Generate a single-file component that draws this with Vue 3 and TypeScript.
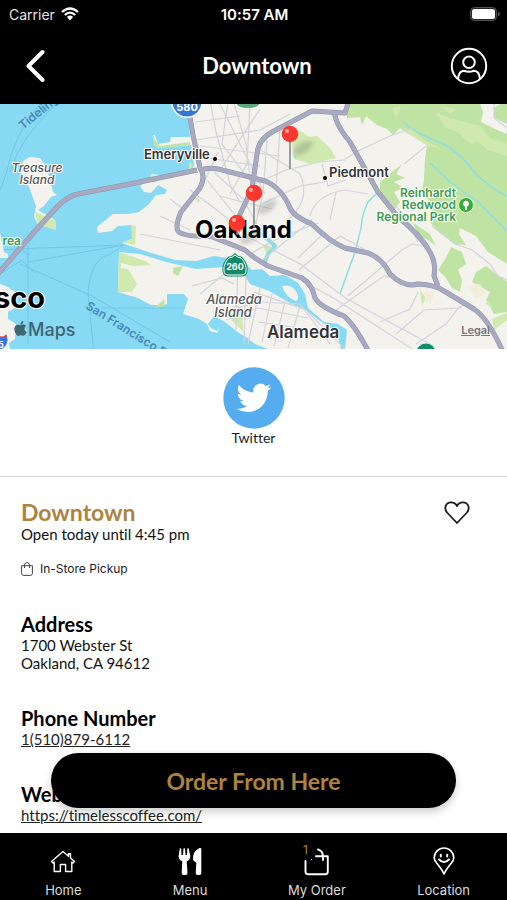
<script setup lang="ts">
interface Tab { id: string; label: string; badge?: number }
interface Pin { x: number; y: number; stem: number }

const place = 'Downtown'
const tabs: Tab[] = [
  { id: 'home', label: 'Home' },
  { id: 'menu', label: 'Menu' },
  { id: 'order', label: 'My Order', badge: 1 },
  { id: 'location', label: 'Location' },
]
const pins: Pin[] = [
  { x: 290, y: 30, stem: 35 },
  { x: 254, y: 89, stem: 34 },
  { x: 237, y: 119, stem: 12 },
]
const highways: string[] = [
  'M-4 172L36 126L58 102Q68 92 78 90L130 80L197 66',
  'M187 -4L193 31L200 64Q206 72 200 84L181 108Q175 122 178 127Q183 133 210 132L245 146Q255 155 268 162L302 174Q312 180 315 194Q320 203 344 212Q354 220 370 250',
  'M200 66Q212 62 226 67L265 77Q282 84 290 104Q293 112 312 120Q330 138 345 144L368 149Q382 154 390 170Q404 184 418 180Q436 181 444 187L474 205Q488 214 504 250',
  'M237 130L240 110L252 85L257 50Q258 36 272 28L312 7L345 9L349 -4',
  'M335 9Q335 20 350 38L378 88L398 113Q422 132 431 150Q436 160 434 172L438 182',
]
const streets: string[] = [
  'M210 -4L216 28L230 80L240 98', 'M220 0L265 90', 'M233 -4L246 40L250 75', 'M250 0L247 60L230 90', 'M196 36L260 26L290 10',
  'M194 52L260 62', 'M207 76L250 130', 'M214 68L244 96L262 130', 'M267 36L263 90L253 130', 'M280 25L276 84', 'M260 46L284 60L300 70Q312 96 286 118',
  'M255 80L286 66L320 58L345 56', 'M262 100L300 82L325 78', 'M322 60L328 82L346 76', 'M345 55L360 46L390 32L412 24', 'M310 112Q316 90 345 86L368 90',
  'M330 116L336 88', 'M190 86L222 110L245 130', 'M170 95L186 107', 'M160 112L190 126', 'M140 130L190 140L220 146', 'M250 134L300 160L347 195L430 240',
  'M250 150L275 136L318 119', 'M299 166L340 132L364 145', 'M312 116L260 158', 'M325 128L298 154', 'M348 192Q378 166 402 146L412 140L430 142',
  'M336 206Q358 190 384 172L402 176', 'M380 218L410 205L418 188', 'M396 230L424 206L460 204L466 198',
  'M416 240L446 220L460 202', 'M378 86L404 110L418 138', 'M302 177L335 195L420 250',
  'M192 182L222 174L234 180', 'M200 190L234 162', 'M238 159L236 226', 'M246 172L244 240', 'M226 216L258 204L308 214', 'M228 207L258 198L300 200L330 240',
  'M254 188L306 206L350 250', 'M258 218L314 226', 'M260 184L248 240', 'M272 190L262 238', 'M286 194L274 242', 'M300 202L288 244',
  'M218 48L205 76', 'M196 18L240 12', 'M200 42L280 52', 'M219 92L272 105', 'M228 -2L222 40L260 90', 'M260 5L220 66',
]
const ferries: string[] = [
  'M40 0Q14 30 6 70L-2 92', 'M56 0Q20 34 10 68', 'M0 146L40 144L100 142L124 141', 'M20 160L92 192L170 238', 'M28 158L124 141L110 150Q90 155 88 190L94 250',
  'M28 142L28 240', 'M20 155L36 170', 'M102 204L220 204', 'M0 129L30 152', 'M0 170L24 155',
]
</script>

<template>
  <div class="app">
    <header class="top">
      <div class="status">
        <span class="carrier">Carrier
          <svg class="wifi" viewBox="0 0 18 14" aria-hidden="true">
            <path d="M1 5Q9 -2 17 5M3.8 8Q9 3.2 14.2 8" fill="none" stroke="#fff" stroke-width="2.3" />
            <path d="M5.9 10Q9 7.2 12.1 10L9 13.4Z" fill="#fff" />
          </svg>
        </span>
        <span class="clock">10:57 AM</span>
        <span class="power">
          <svg class="battery" viewBox="0 0 30 14" aria-hidden="true">
            <rect x=".5" y=".5" width="26" height="13" rx="4" fill="#222" stroke="#555" />
            <rect x="2" y="2" width="23" height="10" rx="2.5" fill="#fff" />
            <path d="M28 4.8Q30 5.5 30 7T28 9.2Z" fill="#555" />
          </svg>
        </span>
      </div>
      <div class="titlebar">
        <button class="iconbtn back" aria-label="Back">
          <svg viewBox="0 0 20 34" width="20" height="34"><path d="M16.500 3L2.500 17L16.500 31" fill="none" stroke="#fff" stroke-width="4" stroke-linecap="round" stroke-linejoin="round" /></svg>
        </button>
        <h1>{{ place }}</h1>
        <button class="iconbtn account" aria-label="Account">
          <svg viewBox="0 0 38 38" width="38" height="38" fill="none" stroke="#fff" stroke-width="2">
            <circle cx="19" cy="19" r="17.2" /><circle cx="19" cy="15.3" r="5.8" />
            <path d="M8.2 31.8Q8.5 24.2 14 23.8Q19 25.7 24 23.8Q29.5 24.2 29.8 31.8" />
          </svg>
        </button>
      </div>
    </header>

    <main>
      <section class="mapbox" aria-label="Map of nearby stores">
        <svg class="map" viewBox="0 0 507 245" preserveAspectRatio="xMidYMid slice">
          <rect width="507" height="245" fill="#88daf4" />
          <path class="ferry" v-for="f in ferries" :key="f" :d="f" />
          <!-- mainland -->
          <path class="land" d="M187 0L190 33L171 33L170 38L158 40L155 31L153 31L154 40L158 44L191 41L194 62L188 68L168 72L151 70L150 75L140 82L144 88L151 89L158 81L167 86L165 90L156 91L149 100L139 108L128 110L113 110L97 123L98 129L112 127L118 122L131 121L134 134L122 139L145 147L175 156L196 157L214 152L235 155L246 160L252 166L262 165L270 172L285 171L298 179L305 190L308 204L324 218L338 220L347 226L345 245L507 245L507 0Z" />
          <!-- Alameda -->
          <path class="land" d="M119 148L140 150L166 158L196 165L224 163L242 167L250 180L269 187L290 199L307 207L324 220L337 229L341 245L268 245L255 240L246 233L239 229L225 218L214 212L208 220L211 224L217 227L220 223L217 229L210 227L207 220L199 215L183 210L188 195L184 190L167 190L167 200L162 201L151 201L138 194L118 188Z" />
          <path class="land" d="M282 182Q290 180 296 187Q300 195 296 197Q286 194 282 182Z" />
          <path class="land" d="M30 53L40 54L47 64L53 88L57 91L51 93L44 102L38 106L55 116L56 126L38 120L34 113L36 102L29 83L20 68L23 57Z" />
          <path class="land" d="M0 128L4 148L8 150L8 154L0 154L0 180L8 183L18 190L10 193L20 201L8 208L8 215L16 220L15 235L9 239L10 245L0 245Z" />
          <!-- parks -->
          <path class="park" d="M347 0L347 14L360 13L362 21L366 12L377 21L387 25L393 31L400 24L412 32L427 40L425 55L424 75L422 88L432 100L434 112L430 118L440 129L455 140L466 141L459 130L460 124L476 132L488 148L507 160L507 30L495 25L481 18L483 8L480 0Z" />
          <path class="park pale" d="M440 2L456 5L450 10ZM435 8L450 14L480 22L490 34L507 40L507 52L488 46L478 38L470 40L458 28L446 24ZM392 4L402 2L396 14ZM404 24L412 26L424 36L440 44L428 42L410 31Z" />
          <path class="park" d="M500 0L494 4L494 14L507 20V0Z" />
          <path class="park" d="M451 143L462 148L466 160L458 166L462 176L460 188L452 184L446 174L438 166L446 154Z" />
          <path class="park" d="M486 162L507 178L507 208L494 210L486 196L490 188L472 178L476 168Z" />
          <path class="park" d="M380 78L392 68L402 60L396 70L405 74L394 78L404 84L394 88L400 98L394 106L380 90Z" />
          <path class="park" d="M412 118L430 130L436 142L428 136L420 132Z" />
          <path class="park pale" d="M492 215L507 209L507 216L494 226ZM420 186L426 194L422 202ZM488 196L494 204L486 200Z" />
          <path class="park pale" d="M299 26L310 33L317 32L330 44L336 54L311 60L294 55L292 39Z" />
          <path class="park pale" d="M119 148L145 157L151 161L132 162L121 159V164L128 165L137 180L132 188L118 188Z" />
          <path class="park" d="M153 31L154 40L158 44L190 41L190 38L160 42L156 37ZM173 164L183 162L180 168L178 172L173 169ZM155 204L164 195L165 202Z" />
          <path class="park pale" d="M150 71L164 73L154 79ZM35 108L56 117L56 126L38 120ZM190 57L194 66L188 68ZM194 92L200 96L198 99ZM131 121L136 122L135 141L122 138L132 135ZM235 200L242 207L243 227L231 216ZM263 140L274 144L266 150Z" />
          <path d="M403 18Q420 32 440 38Q460 48 476 70Q490 84 507 92M430 59L450 78L478 98L507 127M378 88L368 98Q362 110 361 124L355 148L340 190M329 6L337 18M294 51L296 54" class="creek" />
          <path d="M262 130L275 142L268 150L264 160" class="creek wide" />
          <path class="land sand" d="M468 182L480 180L486 190L476 194ZM424 188L434 188L432 198L426 198Z" />
          <path class="street" v-for="s in streets" :key="s" :d="s" />
          <path class="street" d="M432 122L455 140L472 146L490 160L498 172L507 176M426 42L404 60M494 0L494 14L507 24" />
          <path class="highway edge" v-for="h in highways" :key="'e' + h" :d="h" />
          <path class="highway" v-for="h in highways" :key="h" :d="h" />
          <!-- route shields -->
          <circle cx="187" cy="-2" r="16" fill="#fff" /><circle cx="187" cy="-2" r="14.500" fill="#3477d5" />
          <text x="187" y="7" class="shield" text-anchor="middle">580</text>
          <ellipse cx="248" cy="0" rx="11" ry="4" fill="#59a980" />
          <path d="M235 151Q238 154 241 154Q247 160 246 167Q246 171 241 171L229 171Q224 171 224 167Q223 160 229 154Q232 154 235 151Z" fill="#138b69" stroke="#138b69" stroke-width="3" />
          <path d="M235 151Q238 154 241 154Q247 160 246 167Q246 171 241 171L229 171Q224 171 224 167Q223 160 229 154Q232 154 235 151Z" fill="none" stroke="#fff" />
          <text x="235" y="166" class="shield small" text-anchor="middle">260</text>
          <circle cx="426" cy="249" r="10" fill="#138b69" stroke="#d4eadf" />
          <path d="M-4 230Q3 235 7 230Q12 243 -4 248Z" fill="#3477d5" stroke="#fff" /><path d="M-4 230Q3 235 6 230L7 234H-4Z" fill="#dc4545" />
          <text x="-2" y="244" class="shield small">5</text>

          <text class="label" x="144" y="55">Emeryville</text><circle cx="215" cy="55" r="2" />
          <text class="label" x="329" y="73">Piedmont</text><circle cx="325" cy="74" r="2" />
          <text class="label big" x="267" y="234">Alameda</text>
          <g class="isle" text-anchor="middle">
            <text x="37" y="68">Treasure</text><text x="37" y="80">Island</text>
            <text x="234" y="200" class="lg">Alameda</text><text x="233" y="213" class="lg">Island</text>
          </g>
          <g class="parkname" text-anchor="end">
            <text x="456" y="93">Reinhardt</text><text x="456" y="105">Redwood</text><text x="456" y="117">Regional Park</text>
            <text x="21" y="141">rea</text>
          </g>
          <circle cx="466" cy="101" r="7.500" fill="#39ad3c" stroke="#e5f5d8" />
          <path d="M465 106V102.500A3 3 0 1 1 467 102.500V106Z" fill="#fff" />
          <text class="sea" transform="translate(23 26) rotate(-39)">Tideling</text>
          <text class="sea" transform="translate(85 204) rotate(32)">San Francisco B</text>
          <text class="city" x="-6" y="204">sco</text>
          <text class="city oak" x="195" y="134">Oakland</text>
          <g v-for="p in pins" :key="p.x">
            <ellipse class="pinshade" :cx="p.x + 13" :cy="p.y + 14" rx="11" ry="5" :transform="`rotate(-32 ${p.x + 13} ${p.y + 14})`" />
            <path :d="`M${p.x} ${p.y + 7}V${p.y + p.stem}`" stroke="#888" stroke-width="1.600" />
            <circle :cx="p.x" :cy="p.y" r="8.300" fill="#fb382f" />
            <circle :cx="p.x - 3" :cy="p.y - 3" r="2" fill="#ffaaa2" />
          </g>
          <g fill="#3f6472">
            <path transform="translate(13 217) scale(.62)" d="M12.152 6.896c-.948 0-2.415-1.078-3.96-1.04-2.04.027-3.91 1.183-4.961 3.014-2.117 3.675-.546 9.103 1.519 12.09 1.013 1.454 2.208 3.09 3.792 3.039 1.52-.065 2.09-.987 3.935-.987 1.831 0 2.35.987 3.96.948 1.637-.026 2.676-1.48 3.676-2.948 1.156-1.688 1.636-3.325 1.662-3.415-.039-.013-3.182-1.221-3.22-4.857-.026-3.04 2.48-4.494 2.597-4.559-1.429-2.09-3.623-2.324-4.39-2.376-2-.156-3.675 1.09-4.61 1.09zM15.53 3.83c.843-1.012 1.4-2.427 1.245-3.83-1.207.052-2.662.805-3.532 1.818-.78.896-1.454 2.338-1.273 3.714 1.338.104 2.715-.688 3.559-1.701" />
            <text class="brand" x="28" y="232">Maps</text>
          </g>
        </svg>
        <a class="legal" href="#legal">Legal</a>
      </section>

      <section class="social">
        <a href="#twitter" class="twitter">
          <svg viewBox="0 0 62 62" width="62" height="62" aria-hidden="true">
            <circle cx="31" cy="31" r="30.700" fill="#55acee" />
            <path fill="#fff" transform="translate(13.500 13.500) scale(1.450)" d="M23.953 4.57a10 10 0 01-2.825.775 4.958 4.958 0 002.163-2.723c-.951.555-2.005.959-3.127 1.184a4.92 4.92 0 00-8.384 4.482C7.69 8.095 4.067 6.13 1.64 3.162a4.822 4.822 0 00-.666 2.475c0 1.71.87 3.213 2.188 4.096a4.904 4.904 0 01-2.228-.616v.06a4.923 4.923 0 003.946 4.827 4.996 4.996 0 01-2.212.085 4.936 4.936 0 004.604 3.417 9.867 9.867 0 01-6.102 2.105c-.39 0-.779-.023-1.17-.067a13.995 13.995 0 007.557 2.209c9.053 0 13.998-7.496 13.998-13.985 0-.21 0-.42-.015-.63A9.935 9.935 0 0024 4.59z" />
          </svg>
          <span>Twitter</span>
        </a>
      </section>

      <section class="details">
        <div class="heading">
          <div>
            <h2 class="name">{{ place }}</h2>
            <p>Open today until 4:45 pm</p>
          </div>
          <button class="iconbtn" aria-label="Add to favourites">
            <svg viewBox="0 0 26 24" width="26" height="24"><path d="M13 22L3 11.500C-.5 7 2 1.300 7 1.300C10 1.300 12 3 13 5C14 3 16 1.300 19 1.300C24 1.300 26.500 7 23 11.500Z" fill="none" stroke="#1c1c1c" stroke-width="1.800" stroke-linejoin="round" /></svg>
          </button>
        </div>
        <div class="pickup">
          <svg viewBox="0 0 12 14" width="12" height="14" fill="none" stroke="#444" aria-hidden="true"><path d="M.6 3.700H11.400V11.500Q11.400 13.400 9.500 13.400H2.500Q.6 13.400 .6 11.500ZM3.500 6V3Q3.700 .6 6 .6T8.500 3V6" /></svg>
          <span>In-Store Pickup</span>
        </div>
        <div class="field">
          <h2>Address</h2>
          <p>1700 Webster St<br>Oakland, CA 94612</p>
        </div>
        <div class="field">
          <h2>Phone Number</h2>
          <a href="tel:15108796112">1(510)879-6112</a>
        </div>
        <div class="field">
          <h2>Website</h2>
          <a href="#website">https://timelesscoffee.com/</a>
        </div>
      </section>
    </main>

    <div class="dock">
      <button class="order">Order From Here</button>
      <nav class="tabs">
        <a v-for="t in tabs" :key="t.id" :href="'#' + t.id" class="tab">
          <svg viewBox="0 0 28 30" width="28" height="30" fill="none" stroke="#fff" stroke-width="1.600" stroke-linejoin="round" aria-hidden="true">
            <path v-if="t.id === 'home'" d="M2.500 15.500L14 5.500L19.500 10.300V7.800H21.500V12L25.500 15.500L24 17L22.800 16V25.500H16.600V18.500H11.400V25.500H5.200V16L4 17Z" stroke-width="1.400" />
            <g v-else-if="t.id === 'menu'" fill="#fff" stroke="none">
              <path d="M3.800 2.500Q4.600 2 5.200 2.500L5.500 9H7L7.500 2.500Q8.300 2 9 2.500L9.500 9H11L11.300 2.500Q12 2 12.700 2.500L14.300 10Q14.500 14 10.700 15.300L11.500 27Q11.500 29 9.500 29H7.500Q5.600 29 5.700 27L6.300 15.300Q2.500 14 2.600 10Z" />
              <path d="M25.300 2.500V27.300Q25.300 29 23.500 29H21.500Q19.500 29 19.700 27L20.300 17L17 14Q16.500 5 23.500 2Q25 1.600 25.300 2.500Z" />
            </g>
            <g v-else-if="t.id === 'order'" stroke-linecap="round" stroke-width="1.900"><path d="M2.500 15V25.500Q2.500 28.300 5.300 28.300H22Q24.800 28.300 24.800 25.500V10.300H13M15 3.500Q19.500 4.500 20 10V14" /><circle cx="8.500" cy="13.500" r=".1" stroke-width=".7" /></g>
            <g v-else stroke-linecap="round"><path d="M14 28Q12 23.500 7 17.500Q4.200 14.500 4.200 11.800A9.800 9.800 0 0 1 23.800 11.800Q23.800 14.500 21 17.500Q16 23.500 14 28Z" /><path d="M10.800 8.800V10.500M17.200 8.800V10.500M9 13.500Q14 18.500 19 13.500" stroke-width="2" /></g>
          </svg>
          <span v-if="t.badge" class="badge">{{ t.badge }}</span>
          <span>{{ t.label }}</span>
        </a>
      </nav>
    </div>
  </div>
</template>

<style>
body { background: #fff; }
</style>

<style scoped>
.app { height: 100vh; display: flex; flex-direction: column; color: #111; background: #fff; font-family: Lato, "Open Sans", sans-serif; font-variant-ligatures: none; overflow: hidden; }
h1, h2, p { margin: 0; }
svg { display: block; }
.iconbtn { border: 0; background: none; padding: 0; cursor: pointer; }
.top { background: #000; color: #fff; }
.status { display: grid; grid-template-columns: 1fr auto 1fr; align-items: center; height: 28px; padding: 0 7px 0 9px; font-family: Inter, sans-serif; font-size: 14px; }
.carrier { display: flex; align-items: center; gap: 6px; color: #e4e4e4; }
.wifi { width: 18px; height: 14px; }
.clock { font-weight: 600; font-size: 15px; }
.power { display: flex; justify-content: flex-end; }
.battery { width: 30px; height: 14px; }
.titlebar { display: grid; grid-template-columns: 1fr auto 1fr; align-items: center; height: 76px; padding: 0 19px 0 26px; }
.back { justify-self: start; }
.account { justify-self: end; }
h1 { font-size: 22px; font-weight: 700; line-height: 28px; }
main { flex: 1; min-height: 0; overflow: hidden auto; }
.mapbox { position: relative; }
.map { width: 100%; height: 245px; font-family: Inter, sans-serif; }
.ferry { fill: none; stroke: #70c6e5; stroke-width: 1; }
.land { fill: #f3f2ed; }
.sand { fill: #f3eedb; }
.park { fill: #bfe3a3; }
.park.pale { fill: #cfe9ae; }
.creek { fill: none; stroke: #8edce4; stroke-width: 1.500; }
.creek.wide { stroke-width: 4; }
.street { fill: none; stroke: #d3d3dc; stroke-width: 1.200; }
.highway { fill: none; stroke: #a8aac2; stroke-width: 4; stroke-linejoin: round; }
.highway.edge { stroke: #8e91aa; stroke-width: 5; }
.label, .city, .isle, .parkname { paint-order: stroke; stroke: #fff; stroke-width: 2; stroke-linejoin: round; }
.label { font-size: 13px; font-weight: 600; fill: #333; }
.label.big { font-size: 17px; }
.isle { font-size: 12px; font-weight: 500; font-style: italic; fill: #555; }
.isle .lg { font-size: 13px; }
.parkname { font-size: 12px; font-weight: 600; fill: #3d9b4b; }
.sea { font-size: 12px; font-weight: 600; fill: #4789b8; }
.city { font-size: 29px; font-weight: 700; fill: #000; }
.city.oak { font-size: 24px; }
.brand { font-size: 18px; font-weight: 500; }
.shield { font-size: 11px; font-weight: 700; fill: #fff; }
.shield.small { font-size: 9px; }
.pinshade { fill: #555; opacity: .25; filter: blur(2px); }
.legal { position: absolute; right: 17px; bottom: 12px; color: #777; font: 600 11px/14px Inter, sans-serif; }
.social { height: 128px; box-sizing: border-box; padding-top: 18px; border-bottom: 1px solid #d5d5d5; display: flex; justify-content: center; align-items: flex-start; }
.twitter { display: flex; flex-direction: column; align-items: center; color: #222; font-size: 14px; line-height: 18px; text-decoration: none; }
.details { padding: 22px 21px 0; font-size: 15px; line-height: 18px; }
.heading { display: flex; justify-content: space-between; align-items: center; padding-right: 16px; }
.heading .name { font-size: 23px; font-weight: 700; line-height: 26px; color: #ad833f; }
.heading .iconbtn { align-self: flex-start; padding-top: 2px; }
.pickup { display: flex; align-items: center; gap: 7px; margin-top: 17px; font-family: Inter, sans-serif; font-size: 12px; color: #222; }
.field { margin-top: 34px; }
.field h2 { font-size: 20px; font-weight: 700; line-height: 24px; color: #000; }
.field a { color: #222; }
.dock { position: relative; background: #000; }
.order { position: absolute; left: 10%; right: 10%; bottom: 100%; margin-bottom: 25px; height: 55px; border: 0; border-radius: 28px; background: #000; color: #ad833f; font: 700 23px/30px Lato, sans-serif; box-shadow: 0 4px 8px rgb(0 0 0 / 20%); cursor: pointer; }
.tabs { display: grid; grid-template-columns: repeat(4, 1fr); height: 67px; box-sizing: border-box; padding-top: 13px; }
.tab { position: relative; display: flex; flex-direction: column; align-items: center; gap: 5px; color: #ddd; font: 400 13px/18px Inter, sans-serif; text-decoration: none; }
.badge { position: absolute; left: 50%; top: -3px; margin-left: -14px; color: #ad833f; font-size: 12px; line-height: 14px; }
</style>
